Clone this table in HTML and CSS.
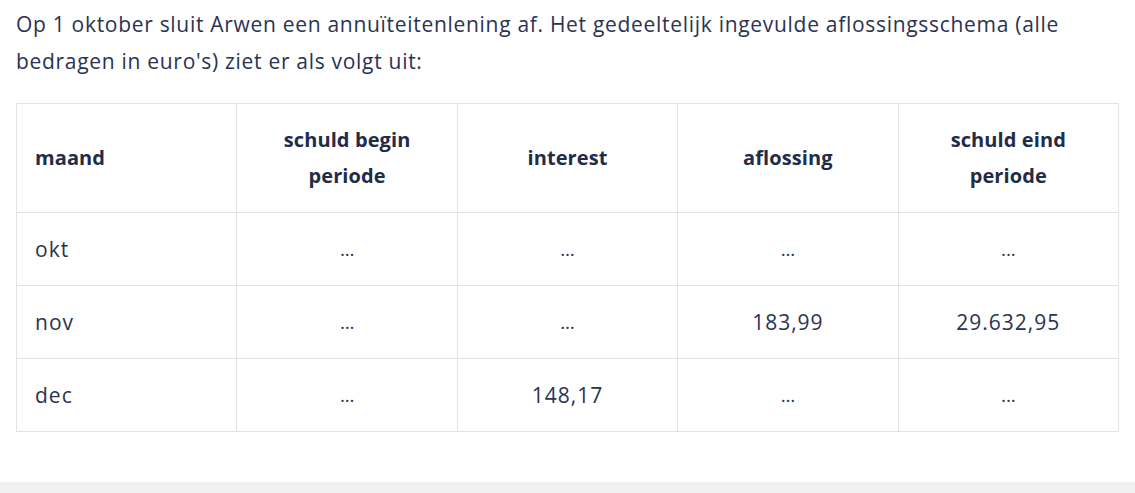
FILE: index.html
```html
<!DOCTYPE html>
<html lang="nl">
<head>
<meta charset="utf-8">
<link rel="stylesheet" href="styles.css">
</head>
<body>
<div class="page">
  <p class="intro">Op 1 oktober sluit Arwen een annuïteitenlening af. Het gedeeltelijk ingevulde aflossingsschema (alle bedragen in euro's) ziet er als volgt uit:</p>
  <table class="schema">
    <thead>
      <tr>
        <th class="first">maand</th>
        <th>schuld begin<br>periode</th>
        <th>interest</th>
        <th>aflossing</th>
        <th>schuld eind<br>periode</th>
      </tr>
    </thead>
    <tbody>
      <tr><td class="first">okt</td><td class="dots">...</td><td class="dots">...</td><td class="dots">...</td><td class="dots">...</td></tr>
      <tr><td class="first">nov</td><td class="dots">...</td><td class="dots">...</td><td>183,99</td><td>29.632,95</td></tr>
      <tr><td class="first">dec</td><td class="dots">...</td><td>148,17</td><td class="dots">...</td><td class="dots">...</td></tr>
    </tbody>
  </table>
</div>
<div class="band"></div>
</body>
</html>
```
FILE: styles.css
```css
html, body {
  margin: 0;
  padding: 0;
  background: #ffffff;
}
body {
  font-family: "Open Sans", Lato, sans-serif;
  color: #2a3351;
}
.page {
  padding: 6px 16px 0 16px;
  height: 482px;
  box-sizing: border-box;
}
.intro {
  margin: 0 0 23px 0;
  font-size: 21px;
  line-height: 37px;
  letter-spacing: 0.7px;
  max-width: 1085px;
}
.schema {
  width: 1103px;
  border-collapse: collapse;
  table-layout: fixed;
  font-size: 21px;
  line-height: 36px;
}
.schema th, .schema td {
  border: 1px solid #e3e3e3;
  text-align: center;
  padding: 18px;
  font-weight: 400;
  letter-spacing: 1px;
}
.schema th {
  font-weight: 700;
  font-size: 20px;
  color: #232c47;
  letter-spacing: 0.1px;
}
.schema td.dots {
  font-size: 19px;
  letter-spacing: -0.2px;
}
.schema .first {
  text-align: left;
}
.band {
  height: 11px;
  background: #f0f0f0;
}
```
